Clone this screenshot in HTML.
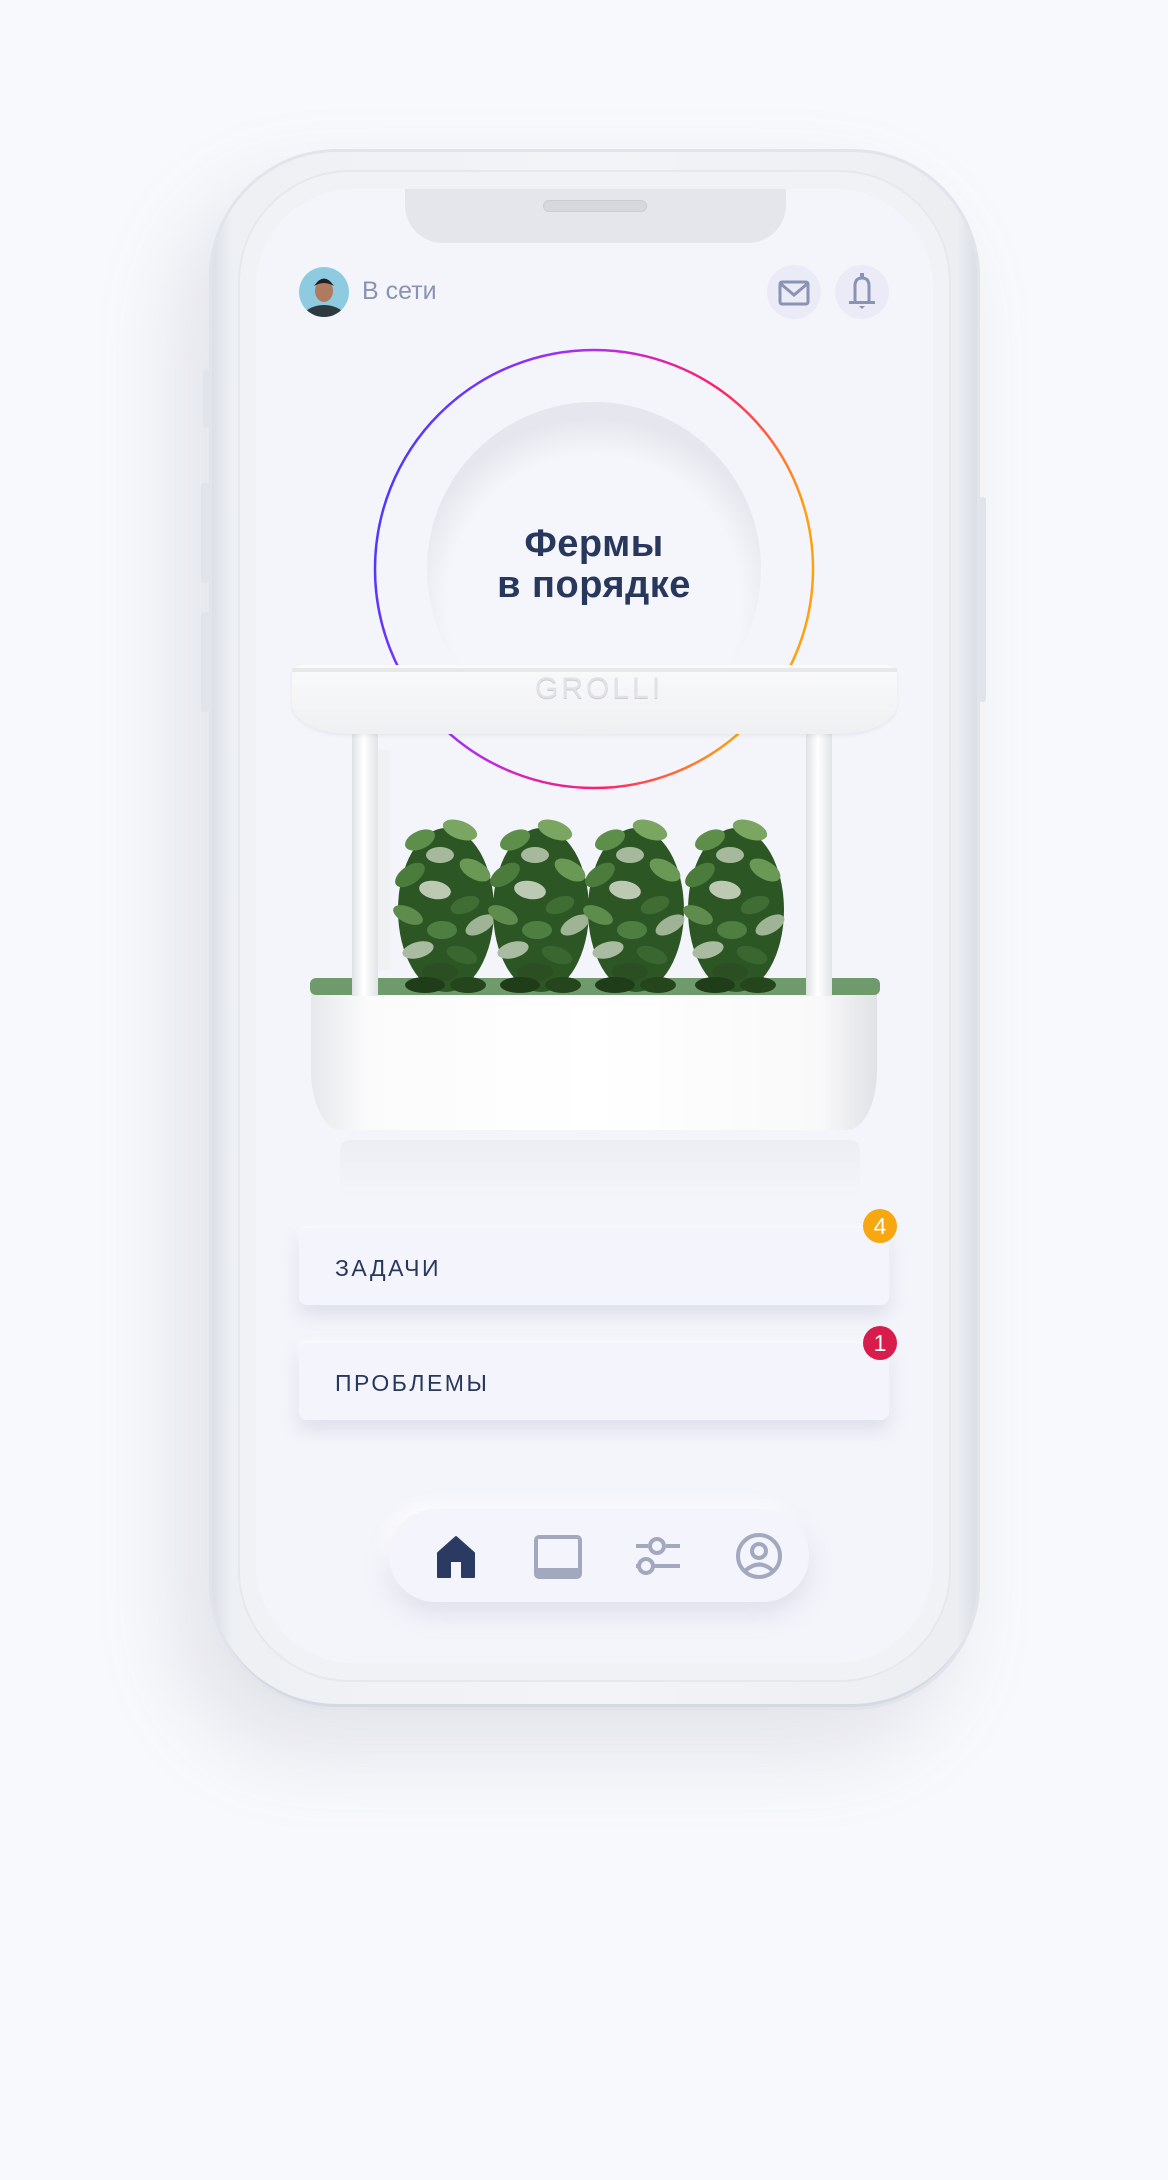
<!DOCTYPE html>
<html><head><meta charset="utf-8"><style>
*{margin:0;padding:0;box-sizing:border-box}
body{width:1168px;height:2180px;background:#f8f9fc;position:relative;overflow:hidden;font-family:"Liberation Sans",sans-serif}
.abs{position:absolute}
.phone{left:209px;top:149px;width:771px;height:1561px;border-radius:128px;background:linear-gradient(90deg,#d9dde5,#eef0f4 3%,#f3f4f7 50%,#eceef2 97%,#d8dce4);box-shadow:-30px 40px 80px rgba(150,155,175,.22),inset 0 0 0 3px #e1e4ea,inset 0 -6px 0 #d5d9e2}
.bezel{left:238px;top:170px;width:713px;height:1512px;border-radius:112px;background:#f1f2f5;box-shadow:inset 0 0 0 2px #e6e8ec}
.screen{left:256px;top:189px;width:677px;height:1474px;border-radius:98px;background:#f4f5fb;overflow:hidden}
.notch{left:405px;top:189px;width:381px;height:54px;background:#e4e6eb;border-radius:0 0 38px 38px}
.spk{left:543px;top:200px;width:104px;height:12px;border-radius:6px;background:#d6d8dd;border:1px solid #c9ccd2}
.btn{background:#e1e4ea;border-radius:3px}
.ic{width:54px;height:54px;border-radius:50%;background:#eaebf6}
.card{left:299px;width:590px;height:77px;border-radius:8px;background:#f4f5fc;box-shadow:0 10px 18px rgba(160,165,190,.28),0 -2px 6px rgba(255,255,255,.9)}
.card span{position:absolute;left:36px;top:27px;font-size:23px;letter-spacing:2.5px;color:#28375c}
.badge{width:34px;height:34px;border-radius:50%;color:#fff;font-size:23px;text-align:center;line-height:34px}
</style></head><body>
<div class="abs phone"></div>
<div class="abs bezel"></div>
<div class="abs btn" style="left:203px;top:370px;width:6px;height:58px"></div>
<div class="abs btn" style="left:201px;top:483px;width:8px;height:100px"></div>
<div class="abs btn" style="left:201px;top:612px;width:8px;height:100px"></div>
<div class="abs btn" style="left:979px;top:497px;width:7px;height:205px"></div>
<div class="abs screen"></div>
<div class="abs notch"></div>
<div class="abs spk"></div>

<!-- header -->
<svg class="abs" style="left:299px;top:267px" width="50" height="50" viewBox="0 0 50 50">
<defs><clipPath id="c"><circle cx="25" cy="25" r="25"/></clipPath></defs>
<g clip-path="url(#c)"><rect width="50" height="50" fill="#8fcbe0"/><ellipse cx="25" cy="52" rx="22" ry="14" fill="#2f3a3f"/><ellipse cx="25" cy="24" rx="9" ry="11" fill="#b07a5e"/><path d="M15 19 Q25 4 35 19 Q25 13 15 19Z" fill="#1f1f24"/></g></svg>
<div class="abs" style="left:362px;top:277px;font-size:25px;color:#8a93b4">В сети</div>
<div class="abs ic" style="left:767px;top:265px"></div>
<div class="abs ic" style="left:835px;top:265px"></div>
<svg class="abs" style="left:778px;top:280px" width="32" height="26" viewBox="0 0 32 26"><rect x="2" y="2" width="28" height="22" rx="2" fill="none" stroke="#8a93b4" stroke-width="3"/><path d="M3 4 L16 15 L29 4" fill="none" stroke="#8a93b4" stroke-width="3"/></svg>
<svg class="abs" style="left:847px;top:272px" width="30" height="40" viewBox="0 0 30 40"><rect x="13" y="1" width="4" height="5" fill="#8a93b4"/><path d="M8 30 V14 Q8 6 15 6 Q22 6 22 14 V30" fill="none" stroke="#8a93b4" stroke-width="3"/><rect x="2" y="29" width="26" height="3" fill="#8a93b4"/><path d="M12 34 H18 L15 37Z" fill="#8a93b4"/></svg>

<!-- ring -->
<svg class="abs" style="left:370px;top:345px" width="448" height="448" viewBox="0 0 448 448">
<defs><linearGradient id="g" x1="0" y1="0" x2="1" y2="0.3"><stop offset="0" stop-color="#2f3cff"/><stop offset=".45" stop-color="#b02cf0"/><stop offset=".75" stop-color="#ff1f6a"/><stop offset="1" stop-color="#ffa010"/></linearGradient>
<radialGradient id="d" cx=".5" cy=".6" r=".55"><stop offset=".8" stop-color="#f5f6fb"/><stop offset="1" stop-color="#e6e7ee"/></radialGradient></defs>
<circle cx="224" cy="224" r="219" fill="#f4f5fb" stroke="url(#g)" stroke-width="2.5"/>
<circle cx="224" cy="224" r="167" fill="url(#d)"/>
</svg>
<div class="abs" style="left:394px;top:524px;width:400px;text-align:center;font-size:38px;line-height:41px;color:#28375c;font-weight:bold;letter-spacing:0.5px">Фермы<br>в порядке</div>

<!-- planter -->
<div class="abs" style="left:340px;top:1140px;width:520px;height:60px;background:linear-gradient(#eceef3,rgba(244,245,251,0));border-radius:10px"></div>
<div class="abs" style="left:311px;top:990px;width:566px;height:140px;background:linear-gradient(90deg,#e6e8eb,#fbfbfc 10%,#fff 50%,#f9f9fa 90%,#e0e2e6);border-radius:6px 6px 30px 30px / 6px 6px 60px 60px;box-shadow:inset 0 42px 0 -40px #e8e9ec"></div>
<div class="abs" style="left:310px;top:978px;width:570px;height:17px;background:#6f9a6c;border-radius:6px"></div>
<svg class="abs" style="left:380px;top:800px" width="430" height="200" viewBox="0 0 430 200">
<g id="b">
<ellipse cx="66" cy="110" rx="48" ry="82" fill="#2c5624"/>
<ellipse cx="40" cy="40" rx="16" ry="9" fill="#5d8f4a" transform="rotate(-25 40 40)"/>
<ellipse cx="80" cy="30" rx="18" ry="9" fill="#7aa662" transform="rotate(20 80 30)"/>
<ellipse cx="60" cy="55" rx="14" ry="8" fill="#a7b99c"/>
<ellipse cx="30" cy="75" rx="17" ry="9" fill="#4b7c3c" transform="rotate(-35 30 75)"/>
<ellipse cx="95" cy="70" rx="17" ry="9" fill="#6a9955" transform="rotate(30 95 70)"/>
<ellipse cx="55" cy="90" rx="16" ry="9" fill="#bccab4" transform="rotate(10 55 90)"/>
<ellipse cx="85" cy="105" rx="15" ry="8" fill="#3f6d33" transform="rotate(-20 85 105)"/>
<ellipse cx="28" cy="115" rx="16" ry="8" fill="#5e8c4c" transform="rotate(25 28 115)"/>
<ellipse cx="100" cy="125" rx="16" ry="8" fill="#9fb494" transform="rotate(-30 100 125)"/>
<ellipse cx="62" cy="130" rx="15" ry="9" fill="#4f7f40"/>
<ellipse cx="38" cy="150" rx="16" ry="8" fill="#a9bba0" transform="rotate(-15 38 150)"/>
<ellipse cx="82" cy="155" rx="16" ry="8" fill="#3a6630" transform="rotate(20 82 155)"/>
<ellipse cx="60" cy="172" rx="18" ry="9" fill="#2b4f22"/>
<ellipse cx="45" cy="185" rx="20" ry="8" fill="#203d19"/>
<ellipse cx="88" cy="185" rx="18" ry="8" fill="#25461d"/>
</g>
<use href="#b" x="95"/><use href="#b" x="190"/><use href="#b" x="290"/>
</svg>
<div class="abs" style="left:352px;top:734px;width:26px;height:262px;background:linear-gradient(90deg,#dfe2e4,#fff 45%,#e1e3e6)"></div>
<div class="abs" style="left:378px;top:750px;width:12px;height:220px;background:#f0f1f3"></div>
<div class="abs" style="left:806px;top:734px;width:26px;height:262px;background:linear-gradient(90deg,#dfe2e4,#fff 45%,#e1e3e6)"></div>
<div class="abs" style="left:292px;top:665px;width:605px;height:69px;background:linear-gradient(#fafafb,#eef0f2);border-radius:10px 10px 60px 60px / 10px 10px 30px 30px;box-shadow:0 2px 4px rgba(0,0,0,.06)"></div>
<div class="abs" style="left:292px;top:668px;width:605px;height:4px;background:#e6e8ea"></div>
<div class="abs" style="left:535px;top:672px;font-size:30px;letter-spacing:3px;color:#e0e2e5;text-shadow:0 1px 0 #c9ccd0">GROLLI</div>

<!-- cards -->
<div class="abs card" style="top:1228px"><span>ЗАДАЧИ</span></div>
<div class="abs card" style="top:1343px"><span>ПРОБЛЕМЫ</span></div>
<div class="abs badge" style="left:863px;top:1209px;background:#f7a70f">4</div>
<div class="abs badge" style="left:863px;top:1326px;background:#d81c4c">1</div>

<!-- nav -->
<div class="abs" style="left:389px;top:1509px;width:420px;height:93px;border-radius:47px;background:#f4f5fc;box-shadow:0 12px 24px rgba(160,165,190,.25),-6px -6px 14px rgba(255,255,255,.9)"></div>
<svg class="abs" style="left:436px;top:1535px" width="40" height="44" viewBox="0 0 40 44"><path d="M20 2 L38 18 V42 H26 V26 H14 V42 H2 V18Z" fill="#2b3a62" stroke="#2b3a62" stroke-width="2" stroke-linejoin="round"/></svg>
<svg class="abs" style="left:534px;top:1535px" width="48" height="44" viewBox="0 0 48 44"><rect x="2" y="2" width="44" height="40" rx="3" fill="none" stroke="#a2a9be" stroke-width="4"/><rect x="2" y="33" width="44" height="9" fill="#a2a9be"/></svg>
<svg class="abs" style="left:634px;top:1536px" width="48" height="40" viewBox="0 0 48 40"><path d="M2 10 H14 M32 10 H46 M2 30 H5 M20 30 H46" stroke="#a2a9be" stroke-width="4"/><circle cx="23" cy="10" r="7" fill="none" stroke="#a2a9be" stroke-width="4"/><circle cx="12" cy="30" r="7" fill="none" stroke="#a2a9be" stroke-width="4"/></svg>
<svg class="abs" style="left:735px;top:1532px" width="48" height="48" viewBox="0 0 48 48"><circle cx="24" cy="24" r="21" fill="none" stroke="#a2a9be" stroke-width="4"/><circle cx="24" cy="19" r="7" fill="none" stroke="#a2a9be" stroke-width="4"/><path d="M10 39 Q24 26 38 39" fill="none" stroke="#a2a9be" stroke-width="4"/></svg>
</body></html>
